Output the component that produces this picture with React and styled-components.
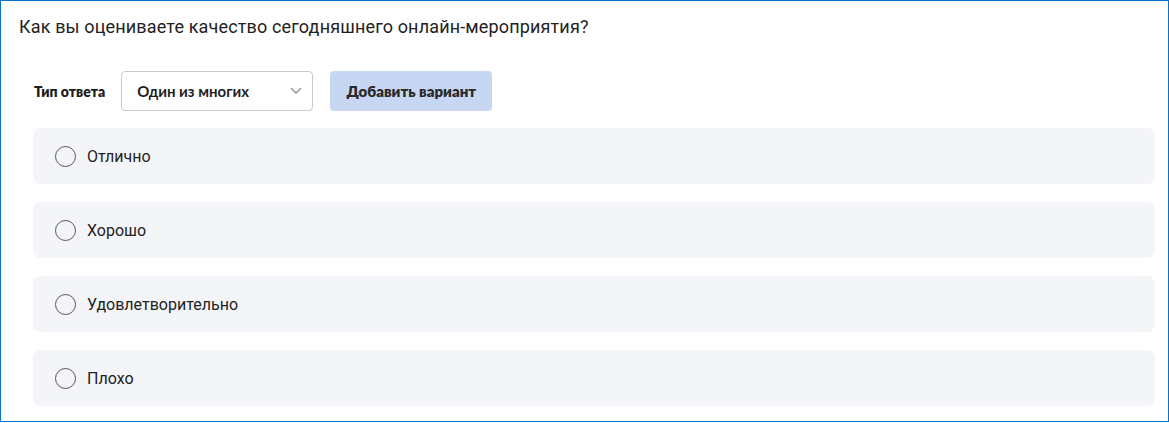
import React, { useState } from 'react'
import styled, { createGlobalStyle } from 'styled-components'

const GlobalStyle = createGlobalStyle`
  html, body {
    margin: 0;
    padding: 0;
    background: #ffffff;
  }
  body {
    font-family: Roboto, "Noto Sans", Arial, sans-serif;
    color: #222222;
  }
`

const options = ['Отлично', 'Хорошо', 'Удовлетворительно', 'Плохо']

const App = () => {
  const [answerType] = useState('Один из многих')

  return (
    <Frame>
      <GlobalStyle />
      <Question>Как вы оцениваете качество сегодняшнего онлайн-мероприятия?</Question>

      <Toolbar>
        <Label>Тип ответа</Label>
        <Select>
          <span>{answerType}</span>
          <svg width="12" height="8" viewBox="0 0 12 8" fill="none">
            <path d="M1.5 1.5L6 6L10.5 1.5" stroke="#8a8a8a" strokeWidth="1.3" strokeLinecap="round" strokeLinejoin="round" />
          </svg>
        </Select>
        <AddButton>Добавить вариант</AddButton>
      </Toolbar>

      <OptionList>
        {options.map((text) => (
          <OptionCard key={text}>
            <Radio />
            <OptionText>{text}</OptionText>
          </OptionCard>
        ))}
      </OptionList>
    </Frame>
  )
}

export default App

const Frame = styled.div`
box-sizing: border-box;
width: 1169px;
height: 422px;
border: 1px solid #0a72c9;
display: flex;
flex-direction: column;
`

const Question = styled.div`
padding: 14px 18px 0 18px;
font-size: 18px;
letter-spacing: 0.15px;
line-height: 24px;
color: #222222;
`

const Toolbar = styled.div`
display: flex;
align-items: center;
margin-top: 32px;
padding-left: 33px;
`

const Label = styled.span`
font-family: Lato, Roboto, sans-serif;
font-weight: 800;
font-size: 14px;
color: #1e1e1e;
margin-right: 16px;
`

const Select = styled.div`
box-sizing: border-box;
width: 192px;
height: 40px;
border: 1px solid #c9c9c9;
border-radius: 4px;
display: flex;
align-items: center;
justify-content: space-between;
padding: 0 10px 0 15px;
font-family: Lato, Roboto, sans-serif;
font-weight: 700;
font-size: 15px;
color: #1e1e1e;
`

const AddButton = styled.button`
box-sizing: border-box;
height: 40px;
width: 162px;
margin-left: 17px;
border: none;
border-radius: 4px;
background: #c7d6f2;
font-family: Lato, Roboto, sans-serif;
font-weight: 800;
font-size: 15px;
color: #2a2a2a;
cursor: pointer;
`

const OptionList = styled.div`
display: flex;
flex-direction: column;
gap: 18px;
margin-top: 17px;
padding: 0 13px 0 32px;
`

const OptionCard = styled.div`
height: 56px;
border-radius: 8px;
background: #f4f5f9;
display: flex;
align-items: center;
padding-left: 22px;
`

const Radio = styled.span`
box-sizing: border-box;
width: 21px;
height: 21px;
border: 1.5px solid #555555;
border-radius: 50%;
`

const OptionText = styled.span`
margin-left: 11px;
font-size: 16px;
color: #222222;
`
